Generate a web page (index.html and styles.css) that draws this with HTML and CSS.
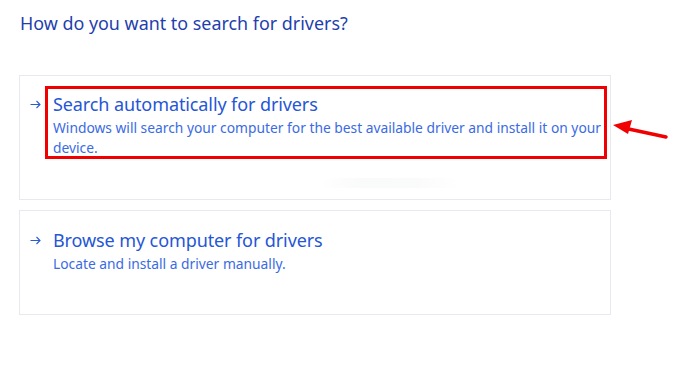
FILE: index.html
```html
<!DOCTYPE html>
<html>
<head>
<meta charset="utf-8">
<link rel="stylesheet" href="styles.css">
</head>
<body>
<div class="page">
  <h1 class="heading">How do you want to search for drivers?</h1>
  <div class="card card-first">
    <svg class="arrow" width="11" height="9" viewBox="0 0 11 9"><path d="M0.5 4.5H10M6.5 1L10 4.5L6.5 8" fill="none" stroke="#2a5bd7" stroke-width="1.1"/></svg>
    <div class="option highlighted">
      <div class="opt-title">Search automatically for drivers</div>
      <div class="opt-desc">Windows will search your computer for the best available driver and install it on your device.</div>
    </div>
    <div class="smudge"></div>
  </div>
  <div class="card card-second">
    <svg class="arrow" width="11" height="9" viewBox="0 0 11 9"><path d="M0.5 4.5H10M6.5 1L10 4.5L6.5 8" fill="none" stroke="#2a5bd7" stroke-width="1.1"/></svg>
    <div class="option">
      <div class="opt-title">Browse my computer for drivers</div>
      <div class="opt-desc">Locate and install a driver manually.</div>
    </div>
  </div>
  <svg class="pointer" width="60" height="24" viewBox="0 0 60 24">
    <line x1="56" y1="17" x2="14" y2="8" stroke="#f00000" stroke-width="3.5" stroke-linecap="round"/>
    <polygon points="3,5 22,0 18,14" fill="#f00000"/>
  </svg>
</div>
</body>
</html>
```
FILE: styles.css
```css
* { box-sizing: border-box; }
html, body { margin: 0; padding: 0; background: #fff; }
body { width: 677px; height: 390px; overflow: hidden; font-family: "Noto Sans", "Open Sans", sans-serif; }
.page { position: relative; padding: 10px 0 0 19px; width: 677px; height: 390px; }
.heading {
  margin: 0 0 0 1px;
  font-weight: 400;
  font-size: 17.9px;
  line-height: 26px;
  color: #1f3fae;
}
.card {
  width: 592px;
  border: 1px solid #e6e9ef;
  display: flex;
  align-items: flex-start;
}
.card-first { margin-top: 39px; height: 125px; padding: 10px 0 0 10px; position: relative; }
.card-second { margin-top: 10px; height: 105px; padding: 16px 0 0 10px; }
.arrow { flex: none; width: 11px; height: 9px; margin-right: 4px; margin-top: 14px; }
.card-first .arrow { margin-top: 14px; }
.option { color: #2f63e0; }
.highlighted {
  border: 3px solid #f00000;
  width: 562px;
  height: 73px;
  padding: 2px 0 0 5px;
  margin-left: 0;
}
.card-second .option { padding-left: 8px; }
.card-second .arrow { margin-top: 9px; }
.opt-title { font-size: 18px; line-height: 26px; color: #2456d6; letter-spacing: -0.1px; }
.opt-desc { font-size: 13.8px; line-height: 20px; color: #3a6be2; margin-top: 1px; }
.smudge {
  position: absolute; left: 300px; top: 102px; width: 140px; height: 10px;
  background: linear-gradient(to right, transparent, #f6f7f8 30%, #f7f8f9 70%, transparent);
  opacity: 0.6;
}
.pointer { position: absolute; left: 610px; top: 120px; }
```
